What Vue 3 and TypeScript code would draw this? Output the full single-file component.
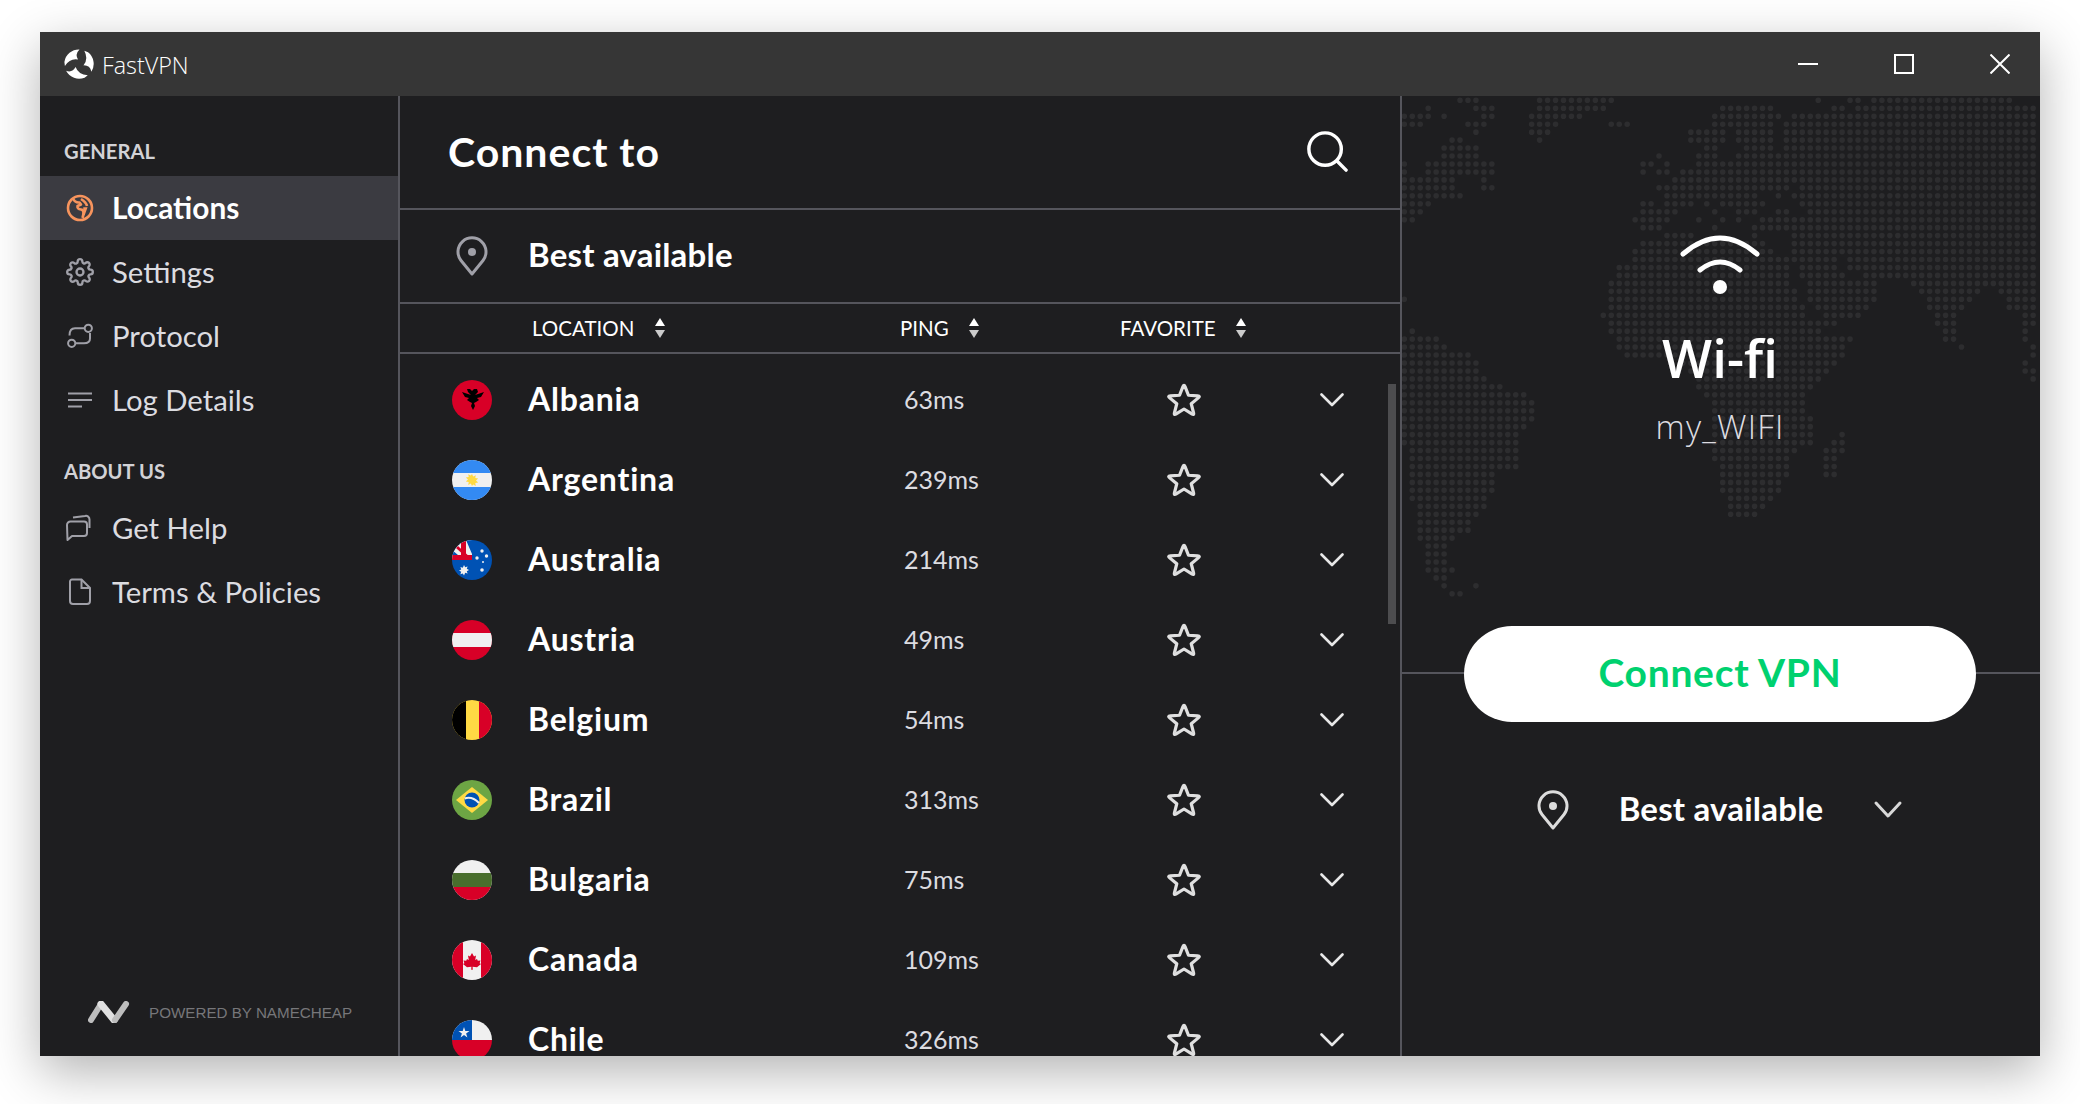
<script setup lang="ts">
import { computed } from 'vue'

const countries = [
  { name: 'Albania', ping: '63ms', code: 'al' },
  { name: 'Argentina', ping: '239ms', code: 'ar' },
  { name: 'Australia', ping: '214ms', code: 'au' },
  { name: 'Austria', ping: '49ms', code: 'at' },
  { name: 'Belgium', ping: '54ms', code: 'be' },
  { name: 'Brazil', ping: '313ms', code: 'br' },
  { name: 'Bulgaria', ping: '75ms', code: 'bg' },
  { name: 'Canada', ping: '109ms', code: 'ca' },
  { name: 'Chile', ping: '326ms', code: 'cl' },
]

const mapRows: string[] = [
  '7-9 17-26 52 56-57 59-76',
  '3 9-11 17-25 40-46 54-55 57-79',
  '0-3 5 10-11 16-22 39-47 49-79',
  '0-2 8-10 16-19 26-28 39-46 48-79',
  '9 16-18 36-40 42-46 48-79',
  '6-7 17 36-40 42-46 48-79',
  '5-9 38-39 43-46 48-79',
  '5-9 32 37-39 42-79',
  '0 3-11 30-31 33 37-79',
  '0 3-11 30 32-33 35-79',
  '0-6 10 34-79',
  '0-6 10-11 32-48 50-79',
  '0-7 33-44 47 49-79',
  '0-3 30-31 33-36 38 40-45 50-79',
  '0-2 30-34 39 42-44 47-48 51-79',
  '0-1 29-33 37 40 42 45-50 51-79',
  '30-32 39 44-79',
  '33-36 44 49-79',
  '30-45 49-79',
  '29-46 49-79',
  '29-48 49-54 56-79',
  '27-48 50-54 56-79',
  '27-48 50-55 58-79',
  '26-48 51-59 64-79',
  '26-49 51-59 65-72 75-79',
  '0 26-49 51-59 66-71 76-79',
  '26-50 52-58 66-70 76-79',
  '25-50 53-57 67-69 78-79',
  '26-54 67-69 78-79',
  '1 26-52 68-69 78',
  '0-4 27-56 68-69 78',
  '0-5 27-55 70 79',
  '0-8 28-55 79',
  '0-9 35-54 78',
  '0-9 36-53 78-79',
  '0-10 37-52 79',
  '0-12 37-51',
  '0-15 38-50',
  '0-16 39-50',
  '0-16 39-50',
  '0-16 39-51',
  '0-15 39-51',
  '0-14 39-51 55',
  '0-14 39-51 54-55',
  '1-14 39-49 53-55',
  '1-14 39-48 53-54',
  '1-14 40-48 53-54',
  '1-11 40-48 53-54',
  '1-11 40-47',
  '1-11 40-47',
  '1-10 41-46',
  '2-10 41-45',
  '2-9 41-44',
  '2-8',
  '2-8',
  '2-6',
  '3-5',
  '3-5',
  '3-5',
  '3-6',
  '4-5',
  '5 9',
  '6-7',
]

const mapPath = computed(() => {
  const parts: string[] = []
  mapRows.forEach((row, r) => {
    const y = 4.3 + r * 7.96
    row.split(' ').forEach((run) => {
      const [a, b] = run.split('-').map(Number)
      const end = b === undefined ? a : b
      for (let c = a; c <= end; c++) {
        parts.push(`M${(2.3 + c * 7.96).toFixed(2)} ${y.toFixed(2)}h0`)
      }
    })
  })
  return parts.join('')
})

// Five-pointed star with softened tips, as in the reference's favourite icon.
const starPath = computed(() => {
  const cx = 17
  const cy = 18.4
  const R = 17.4
  const r = 7.6
  const pt = (rad: number, deg: number) => {
    const t = ((deg - 90) * Math.PI) / 180
    return [cx + rad * Math.cos(t), cy + rad * Math.sin(t)]
  }
  const mix = (a: number[], b: number[], k: number) => [a[0] + (b[0] - a[0]) * k, a[1] + (b[1] - a[1]) * k]
  const f = (p: number[]) => `${p[0].toFixed(2)} ${p[1].toFixed(2)}`
  let d = ''
  for (let i = 0; i < 5; i++) {
    const tip = pt(R, i * 72)
    const before = pt(r, i * 72 - 36)
    const after = pt(r, i * 72 + 36)
    const a = mix(tip, before, 0.24)
    const b = mix(tip, after, 0.24)
    d += `${i === 0 ? 'M' : 'L'}${f(a)}Q${f(tip)} ${f(b)}L${f(after)}`
  }
  return d + 'Z'
})

const blade = 'M.4 13A14.6 14.6 0 0 1 15.5 .4Q10.5 5 14 10.5Q6 9 .9 17Z'
</script>

<template>
  <div class="page">
  <div class="window">
    <header class="titlebar">
      <svg class="logo" viewBox="0 0 30 30" width="30" height="30" fill="#fff">
        <path :d="blade" />
        <path :d="blade" transform="rotate(120 15 15)" />
        <path :d="blade" transform="rotate(240 15 15)" />
      </svg>
      <span class="app-name">FastVPN</span>
      <div class="controls">
        <svg viewBox="0 0 20 20" width="20" height="20"><path d="M0 10h20" stroke="#fff" stroke-width="2" /></svg>
        <svg viewBox="0 0 20 20" width="20" height="20"><rect x="1" y="1" width="18" height="18" fill="none" stroke="#fff" stroke-width="2" /></svg>
        <svg viewBox="0 0 20 20" width="20" height="20"><path d="M0.5 0.5l19 19M19.5 0.5l-19 19" stroke="#fff" stroke-width="2" /></svg>
      </div>
    </header>

    <div class="body">
      <aside class="sidebar">
        <div class="section first">GENERAL</div>
        <div class="item active">
          <svg viewBox="0 0 28 28" width="28" height="28" fill="none" stroke="#f7945d" stroke-width="2.6">
            <circle cx="14" cy="14" r="12" />
            <path d="M7 4.5Q9 9 13.5 8.5L15 10.5L11.5 12Q11 15 15 15.5Q19 16 16.5 24" stroke-linejoin="round" />
            <path d="M15 5Q20 8 21 12" />
            <path d="M18 14L20.5 14L18 21Z" fill="#f7945d" stroke-width="1.5" />
          </svg>
          <span>Locations</span>
        </div>
        <div class="item">
          <svg viewBox="0 0 24 24" width="28" height="28" fill="none" stroke="#a0a0a8" stroke-width="2">
            <circle cx="12" cy="12" r="3" />
            <path d="M19.4 15a1.65 1.65 0 0 0 .33 1.82l.06.06a2 2 0 0 1 0 2.83 2 2 0 0 1-2.83 0l-.06-.06a1.65 1.65 0 0 0-1.82-.33 1.65 1.65 0 0 0-1 1.51V21a2 2 0 0 1-2 2 2 2 0 0 1-2-2v-.09A1.65 1.65 0 0 0 9 19.4a1.65 1.65 0 0 0-1.82.33l-.06.06a2 2 0 0 1-2.83 0 2 2 0 0 1 0-2.83l.06-.06a1.65 1.65 0 0 0 .33-1.82 1.65 1.65 0 0 0-1.51-1H3a2 2 0 0 1-2-2 2 2 0 0 1 2-2h.09A1.65 1.65 0 0 0 4.6 9a1.65 1.65 0 0 0-.33-1.82l-.06-.06a2 2 0 0 1 0-2.83 2 2 0 0 1 2.83 0l.06.06a1.65 1.65 0 0 0 1.82.33H9a1.65 1.65 0 0 0 1-1.51V3a2 2 0 0 1 2-2 2 2 0 0 1 2 2v.09a1.65 1.65 0 0 0 1 1.51 1.65 1.65 0 0 0 1.82-.33l.06-.06a2 2 0 0 1 2.83 0 2 2 0 0 1 0 2.83l-.06.06a1.65 1.65 0 0 0-.33 1.82V9a1.65 1.65 0 0 0 1.51 1H21a2 2 0 0 1 2 2 2 2 0 0 1-2 2h-.09a1.65 1.65 0 0 0-1.51 1z" />
          </svg>
          <span>Settings</span>
        </div>
        <div class="item">
          <svg viewBox="0 0 28 28" width="28" height="28" fill="none" stroke="#a0a0a8" stroke-width="2">
            <circle cx="22.3" cy="6.3" r="3.6" />
            <circle cx="5.7" cy="21.3" r="3.6" />
            <path d="M18.5 6.3H9Q3.5 6.3 3.5 13.5" />
            <path d="M24 11V16.5Q24 21.3 18 21.3H9.5" />
          </svg>
          <span>Protocol</span>
        </div>
        <div class="item">
          <svg viewBox="0 0 28 28" width="28" height="28" fill="none" stroke="#a0a0a8" stroke-width="2">
            <path d="M2 7.5H26M2 14H26M2 20.5H16" />
          </svg>
          <span>Log Details</span>
        </div>
        <div class="section">ABOUT US</div>
        <div class="item">
          <svg viewBox="0 0 28 28" width="28" height="28" fill="none" stroke="#a0a0a8" stroke-width="2">
            <path d="M1 11a3.5 3.5 0 0 1 3.5-3.5H18a3 3 0 0 1 3 3V19a3 3 0 0 1-3 3H6L1.5 26Z" stroke-linejoin="round" />
            <path d="M7 3.5L19 2a3.5 3.5 0 0 1 4.5 3.5V14" />
          </svg>
          <span>Get Help</span>
        </div>
        <div class="item">
          <svg viewBox="0 0 28 28" width="28" height="28" fill="none" stroke="#a0a0a8" stroke-width="2">
            <path d="M6 1.5H15.5L24 10V23a3 3 0 0 1-3 3H7a3 3 0 0 1-3-3V3.5a2 2 0 0 1 2-2Z" />
            <path d="M15.5 1.5V10H24" />
          </svg>
          <span>Terms &amp; Policies</span>
        </div>
        <footer class="powered">
          <svg viewBox="0 0 42 22" width="42" height="22">
            <path d="M3 19L13 3" stroke="#bdbdbd" stroke-width="6" stroke-linecap="round" />
            <path d="M13 3L26 19" stroke="#e0e0e0" stroke-width="7" stroke-linecap="round" />
            <path d="M27 19L38 3" stroke="#bdbdbd" stroke-width="6" stroke-linecap="round" />
          </svg>
          <span>POWERED BY NAMECHEAP</span>
        </footer>
      </aside>

      <main class="middle">
        <div class="heading">
          <h1>Connect to</h1>
          <svg viewBox="0 0 44 44" width="42" height="42" fill="none" stroke="#fff" stroke-width="3.6" stroke-linecap="round">
            <circle cx="20" cy="20" r="17" />
            <path d="M32.5 32.5L42 42" />
          </svg>
        </div>
        <div class="best">
          <svg class="pin" viewBox="0 0 32 40" width="32" height="40">
            <path d="M16 38L5 24.5A14 14 0 1 1 27 24.5Z" fill="none" stroke="#a0a0a8" stroke-width="3" stroke-linejoin="round" />
            <circle cx="16" cy="16" r="4" fill="#a0a0a8" />
          </svg>
          <span>Best available</span>
        </div>
        <div class="thead">
          <div class="th loc">LOCATION
            <svg viewBox="0 0 10 20" width="10" height="20"><path d="M5 0L10 8H0Z" fill="#fff" /><path d="M5 20L10 12H0Z" fill="#ccc" /></svg>
          </div>
          <div class="th ping-h">PING
            <svg viewBox="0 0 10 20" width="10" height="20"><path d="M5 0L10 8H0Z" fill="#fff" /><path d="M5 20L10 12H0Z" fill="#ccc" /></svg>
          </div>
          <div class="th fav">FAVORITE
            <svg viewBox="0 0 10 20" width="10" height="20"><path d="M5 0L10 8H0Z" fill="#fff" /><path d="M5 20L10 12H0Z" fill="#ccc" /></svg>
          </div>
        </div>
        <div class="list">
          <div v-for="c in countries" :key="c.code" class="row">
            <svg class="flag" viewBox="0 0 40 40" width="40" height="40">
              <defs><clipPath :id="'clip-' + c.code"><circle cx="20" cy="20" r="20" /></clipPath></defs>
              <g :clip-path="'url(#clip-' + c.code + ')'">
                <template v-if="c.code === 'al'">
                  <rect width="40" height="40" fill="#d80027" />
                  <path d="M15 9h3l2 2 2-2h3l1 3-3 3 9-3-3 5-4 1 2 2-3 2-2 1 1 3-2 4-2-4 1-3-2-1-3-2 2-2-4-1-3-5 9 3-3-3z" fill="#000" />
                </template>
                <template v-else-if="c.code === 'ar'">
                  <rect width="40" height="40" fill="#f0f0f0" />
                  <rect width="40" height="13" fill="#338af3" />
                  <rect y="27" width="40" height="13" fill="#338af3" />
                  <path d="M20 14l1.2 2.6 2.6-1.4-.5 2.9 2.9.5-2.2 2 2.2 2-2.9.5.5 2.9-2.6-1.4L20 26l-1.2-2.4-2.6 1.4.5-2.9-2.9-.5 2.2-2-2.2-2 2.9-.5-.5-2.9 2.6 1.4z" fill="#ffda44" />
                </template>
                <template v-else-if="c.code === 'au'">
                  <rect width="40" height="40" fill="#0052b4" />
                  <rect width="20" height="20" fill="#f0f0f0" />
                  <path d="M0 15h9V0h5v15h6v5H0z" fill="#d80027" />
                  <path d="M6 6l14 13h-4L4 8z" fill="#d80027" />
                  <path d="M14 0h6v14zM0 10v5h6z" fill="#0052b4" />
                  <path d="M12 25l1.2 2.2 2.4-.8-.8 2.4 2.2 1.2-2.2 1.2.8 2.4-2.4-.8L12 35.6l-1.2-2.2-2.4.8.8-2.4-2.2-1.2 2.2-1.2-.8-2.4 2.4.8z" fill="#f0f0f0" />
                  <circle cx="30" cy="11" r="1.7" fill="#f0f0f0" />
                  <circle cx="25" cy="18" r="1.7" fill="#f0f0f0" />
                  <circle cx="34.5" cy="16" r="1.7" fill="#f0f0f0" />
                  <circle cx="31" cy="22" r="1" fill="#f0f0f0" />
                  <circle cx="30" cy="30" r="1.8" fill="#f0f0f0" />
                </template>
                <template v-else-if="c.code === 'at'">
                  <rect width="40" height="40" fill="#d80027" />
                  <rect y="13" width="40" height="14" fill="#f0f0f0" />
                </template>
                <template v-else-if="c.code === 'be'">
                  <rect width="40" height="40" fill="#ffda44" />
                  <rect width="14" height="40" fill="#000" />
                  <rect x="27" width="13" height="40" fill="#d80027" />
                </template>
                <template v-else-if="c.code === 'br'">
                  <rect width="40" height="40" fill="#6da544" />
                  <path d="M20 7L36 20L20 33L4 20Z" fill="#ffda44" />
                  <circle cx="20" cy="20" r="7.5" fill="#0052b4" />
                  <path d="M12.8 18.5Q20 16 27 23" fill="none" stroke="#f0f0f0" stroke-width="2" />
                </template>
                <template v-else-if="c.code === 'bg'">
                  <rect width="40" height="40" fill="#f0f0f0" />
                  <rect y="13" width="40" height="14" fill="#496e2d" />
                  <rect y="27" width="40" height="13" fill="#d80027" />
                </template>
                <template v-else-if="c.code === 'ca'">
                  <rect width="40" height="40" fill="#f0f0f0" />
                  <rect width="11" height="40" fill="#d80027" />
                  <rect x="29" width="11" height="40" fill="#d80027" />
                  <path d="M20 13l2 3.5 2-1-.8 4.5 1.8-1 .8 1.8 2.7-.4-.9 2.8 1.4.8-4 3.2-4.4-.4.2 3h-1.6l.2-3-4.4.4-4-3.2 1.4-.8-.9-2.8 2.7.4.8-1.8 1.8 1-.8-4.5 2 1z" fill="#d80027" />
                </template>
                <template v-else>
                  <rect width="40" height="20" fill="#f0f0f0" />
                  <rect y="20" width="40" height="20" fill="#d80027" />
                  <rect width="20" height="20" fill="#0052b4" />
                  <path d="M12 7l1.3 4h4.2l-3.4 2.5 1.3 4-3.4-2.5-3.4 2.5 1.3-4-3.4-2.5h4.2z" fill="#f0f0f0" />
                </template>
              </g>
            </svg>
            <span class="name">{{ c.name }}</span>
            <span class="ping">{{ c.ping }}</span>
            <svg class="star" viewBox="0 0 34 34" width="34" height="34">
              <path :d="starPath" fill="none" stroke="#e0e0e0" stroke-width="3.2" stroke-linejoin="round" />
            </svg>
            <svg class="chev" viewBox="0 0 24 14" width="24" height="14">
              <path d="M1.5 1.5L12 12L22.5 1.5" fill="none" stroke="#e8e8e8" stroke-width="2.6" stroke-linecap="round" stroke-linejoin="round" />
            </svg>
          </div>
          <div class="scrollbar"></div>
        </div>
      </main>

      <section class="right">
        <svg class="map" width="638" height="520"><path :d="mapPath" stroke="#2d2d2f" stroke-width="5.6" stroke-linecap="round" fill="none" /></svg>
        <svg class="wifi" viewBox="0 0 84 64" width="84" height="64" fill="none" stroke="#fff" stroke-width="5" stroke-linecap="round">
          <path d="M5 22Q42 -10 79 22" />
          <path d="M22 38Q42 22 62 38" />
          <circle cx="42" cy="55" r="7" fill="#fff" stroke="none" />
        </svg>
        <div class="wifi-title">Wi-fi</div>
        <div class="wifi-sub">my_WIFI</div>
        <div class="btn-wrap">
          <button class="connect"><span>Connect VPN</span></button>
        </div>
        <div class="dropdown">
          <svg viewBox="0 0 32 40" width="32" height="40">
            <path d="M16 38L5 24.5A14 14 0 1 1 27 24.5Z" fill="none" stroke="#dcdcdc" stroke-width="3" stroke-linejoin="round" />
            <circle cx="16" cy="16" r="4" fill="#dcdcdc" />
          </svg>
          <span class="dd-label">Best available</span>
          <svg viewBox="0 0 30 20" width="30" height="20">
            <path d="M3 3L15 16L27 3" fill="none" stroke="#d8d8d8" stroke-width="3" stroke-linecap="round" stroke-linejoin="round" />
          </svg>
        </div>
      </section>
    </div>
  </div>
  </div>
</template>

<style>
html, body { background: #fff; }
</style>

<style scoped>
.page {
  height: 1104px;
  box-sizing: border-box;
  padding: 32px 0 0 40px;
  overflow: hidden;
}
.window {
  width: 2000px;
  height: 1024px;
  background: #1e1e20;
  box-shadow: 0 16px 48px rgba(0, 0, 0, 0.3);
  display: flex;
  flex-direction: column;
  overflow: hidden;
  font-family: Lato, sans-serif;
  color: #fff;
}
.titlebar {
  height: 64px;
  flex: none;
  background: #363636;
  display: flex;
  align-items: center;
  padding: 0 30px 0 24px;
}
.logo { margin-right: 8px; }
.app-name {
  font-family: "Open Sans", sans-serif;
  font-weight: 300;
  font-size: 23.3px;
  padding-top: 2px;
}
.controls {
  margin-left: auto;
  display: flex;
  gap: 76px;
  align-items: center;
}
.body { flex: 1; display: flex; min-height: 0; }
.sidebar {
  width: 360px;
  flex: none;
  border-right: 2px solid #55555c;
  display: flex;
  flex-direction: column;
  box-sizing: border-box;
}
.section {
  height: 64px;
  box-sizing: border-box;
  padding: 27px 0 0 24px;
  font-size: 20.2px;
  font-weight: 700;
  line-height: 24px;
  color: #d2d2d6;
}
.section.first { height: 80px; padding-top: 43px; }
.item {
  height: 64px;
  display: flex;
  align-items: center;
  padding-left: 26px;
  gap: 18px;
  font-size: 29.3px;
  color: #dcdce0;
  flex: none;
}
.item span { padding-bottom: 2px; }
.item.active { background: #3b3b41; color: #fff; font-weight: 700; font-size: 29.8px; }
.powered {
  margin-top: auto;
  height: 88px;
  display: flex;
  align-items: center;
  padding: 0 0 0 48px;
  gap: 19px;
  font-family: "Liberation Sans", sans-serif;
  font-size: 15.2px;
  color: #77777a;
}
.middle {
  width: 1002px;
  flex: none;
  box-sizing: border-box;
  border-right: 2px solid #55555c;
  display: flex;
  flex-direction: column;
  min-height: 0;
}
.heading {
  height: 114px;
  flex: none;
  box-sizing: border-box;
  border-bottom: 2px solid #55555c;
  display: flex;
  align-items: center;
  justify-content: space-between;
  padding: 0 52px 2px 48px;
}
h1 { margin: 0; font-size: 41px; font-weight: 700; letter-spacing: 1px; }
.best {
  height: 94px;
  flex: none;
  box-sizing: border-box;
  border-bottom: 2px solid #55555c;
  display: flex;
  align-items: center;
  padding-left: 56px;
  gap: 40px;
  font-size: 33px;
  font-weight: 700;
  letter-spacing: 0.2px;
}
.best span { padding-bottom: 5px; }
.thead {
  height: 50px;
  flex: none;
  box-sizing: border-box;
  border-bottom: 2px solid #55555c;
  display: flex;
  align-items: center;
  font-size: 20.5px;
}
.th { display: flex; align-items: center; gap: 21px; }
.loc { margin-left: 132px; width: 368px; }
.ping-h { width: 220px; gap: 20px; }
.fav { gap: 20px; }
.list {
  flex: 1;
  min-height: 0;
  padding-top: 6px;
  position: relative;
  overflow: hidden;
}
.row {
  height: 80px;
  display: flex;
  align-items: center;
  padding-left: 52px;
}
.flag { flex: none; margin-right: 36px; }
.name { width: 376px; font-size: 32px; font-weight: 700; letter-spacing: 0.8px; padding-bottom: 3px; }
.ping { width: 263px; font-size: 25px; color: #dcdce0; padding-bottom: 2px; }
.star { flex: none; margin-right: 119px; }
.chev { flex: none; }
.scrollbar {
  position: absolute;
  left: 988px;
  top: 30px;
  width: 8px;
  height: 240px;
  background: #4d4d4f;
}
.right {
  flex: 1;
  position: relative;
  display: flex;
  flex-direction: column;
  align-items: center;
  padding: 136px 2px 0 0;
  min-width: 0;
}
.map { position: absolute; left: 0; top: 0; }
.wifi, .wifi-title, .wifi-sub, .btn-wrap, .dropdown { position: relative; }
.wifi-title {
  margin-top: 32px;
  font-family: "Open Sans", sans-serif;
  font-weight: 600;
  font-size: 53px;
  line-height: 60px;
}
.wifi-sub {
  margin-top: 19px;
  font-family: "Open Sans", sans-serif;
  font-weight: 300;
  font-size: 33px;
  letter-spacing: 1.2px;
  line-height: 40px;
  color: #dcdce0;
}
.btn-wrap {
  margin-top: 179px;
  align-self: stretch;
  margin-right: -2px;
  display: flex;
  justify-content: center;
  padding-right: 2px;
}
.btn-wrap::before {
  content: "";
  position: absolute;
  left: 0;
  right: 0;
  top: 46px;
  height: 2px;
  background: #55555c;
}
.connect {
  position: relative;
  width: 512px;
  height: 96px;
  border: none;
  border-radius: 48px;
  background: #fff;
  color: #00d16f;
  font-family: Lato, sans-serif;
  font-weight: 700;
  font-size: 39px;
  letter-spacing: 0.7px;
  padding: 0 0 4px;
}
.dropdown {
  margin-top: 68px;
  height: 40px;
  display: flex;
  align-items: center;
  gap: 50px;
  font-size: 33px;
  font-weight: 700;
  letter-spacing: 0.2px;
}
.dd-label { padding-bottom: 4px; }
</style>
